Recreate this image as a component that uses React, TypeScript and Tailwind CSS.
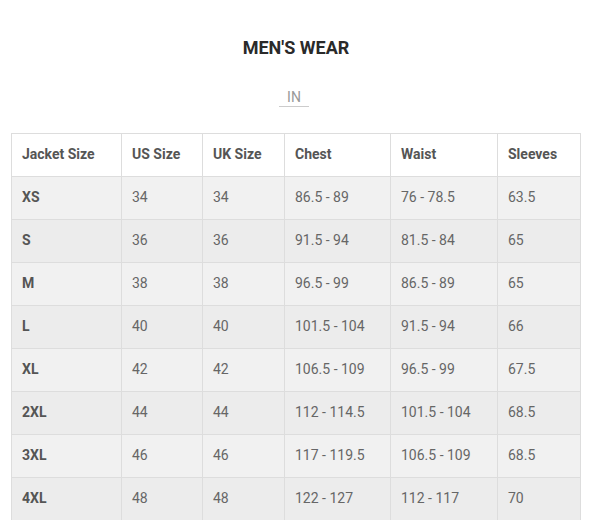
const rows = [
  ["XS", "34", "34", "86.5 - 89", "76 - 78.5", "63.5"],
  ["S", "36", "36", "91.5 - 94", "81.5 - 84", "65"],
  ["M", "38", "38", "96.5 - 99", "86.5 - 89", "65"],
  ["L", "40", "40", "101.5 - 104", "91.5 - 94", "66"],
  ["XL", "42", "42", "106.5 - 109", "96.5 - 99", "67.5"],
  ["2XL", "44", "44", "112 - 114.5", "101.5 - 104", "68.5"],
  ["3XL", "46", "46", "117 - 119.5", "106.5 - 109", "68.5"],
  ["4XL", "48", "48", "122 - 127", "112 - 117", "70"],
]

const headers = ["Jacket Size", "US Size", "UK Size", "Chest", "Waist", "Sleeves"]
const widths = ["w-[110px]", "w-[81px]", "w-[82px]", "w-[106px]", "w-[107px]", "w-[83px]"]

export default function App() {
  return (
    <div className="w-[595px] h-[520px] overflow-hidden bg-white font-['Roboto',sans-serif]">
      <h2 className="pt-[38px] pr-[3px] text-center text-[18px] font-bold leading-[20px] text-[#2a2a2a]">MEN'S WEAR</h2>
      <div className="mt-[31px] flex justify-center pr-[7px]">
        <span className="border-b border-[#ccc] px-[8px] pb-[1px] text-[14px] leading-[16px] text-[#999]">IN</span>
      </div>
      <table className="mt-[26px] ml-[11px] table-fixed border-collapse text-[14px] text-[#666]">
        <thead>
          <tr className="h-[43px] bg-white">
            {headers.map((h, i) => (
              <th key={h} className={`${widths[i]} border border-[#ddd] px-[10px] pb-[2px] text-left font-bold text-[#555]`}>{h}</th>
            ))}
          </tr>
        </thead>
        <tbody>
          {rows.map((r, ri) => (
            <tr key={r[0]} className={`h-[43px] ${ri % 2 === 0 ? "bg-[#f1f1f1]" : "bg-[#ececec]"}`}>
              {r.map((c, ci) => (
                <td key={ci} className={`border border-[#ddd] px-[10px] pb-[2px] ${ci === 0 ? "font-bold text-[#555]" : ""}`}>{c}</td>
              ))}
            </tr>
          ))}
        </tbody>
      </table>
    </div>
  )
}
